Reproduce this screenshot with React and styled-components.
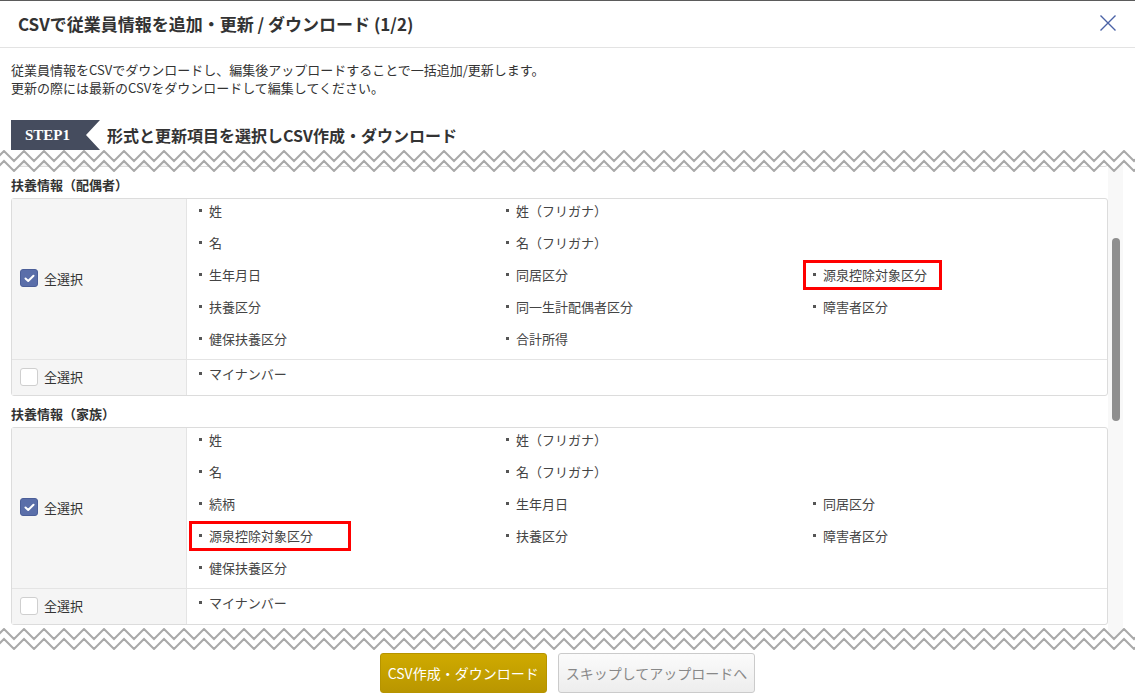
import React, { useLayoutEffect, useRef, useState } from "react";
import styled, { createGlobalStyle } from "styled-components";

const GlobalStyle = createGlobalStyle`
  html, body {
    margin: 0;
    padding: 0;
    background: #fff;
  }
  body {
    font-family: "Noto Sans CJK JP", "Noto Sans", sans-serif;
    color: #333;
  }
  *, *::before, *::after {
    box-sizing: border-box;
  }
`;

const Modal = styled.div`
  width: 1135px;
  height: 697px;
  border-top: 1px solid #5b5b5b;
  background: #fff;
  display: flex;
  flex-direction: column;
  overflow: hidden;
`;

const Header = styled.header`
  height: 47px;
  flex-shrink: 0;
  display: flex;
  align-items: center;
  justify-content: space-between;
  padding: 0 19px 2px 18px;
  border-bottom: 1px solid #e3e3e3;

  h1 {
    margin: 0;
    font-size: 17px;
    font-weight: bold;
    color: #333;
  }
`;

const CloseButton = styled.button`
  border: 0;
  background: none;
  padding: 0;
  width: 16px;
  height: 16px;
  display: flex;
  cursor: pointer;
`;

const Intro = styled.div`
  padding: 13px 11px 0;
  font-size: 13px;
  line-height: 18px;
  color: #333;
  flex-shrink: 0;

  p {
    margin: 0;
  }
`;

const StepRow = styled.div`
  margin-top: 23px;
  height: 30px;
  flex-shrink: 0;
  display: flex;
  align-items: center;
  gap: 7px;
  padding-left: 11px;

  h2 {
    margin: 0;
    font-size: 16px;
    font-weight: bold;
    color: #333;
  }
`;

const StepBadge = styled.span`
  width: 89px;
  height: 30px;
  display: flex;
  align-items: center;
  padding-left: 14px;
  background: #454c5e;
  clip-path: polygon(0 0, 100% 0, calc(100% - 14px) 50%, 100% 100%, 0 100%);
  color: #fff;
  font-family: "Liberation Serif", serif;
  font-weight: bold;
  font-size: 15px;
`;

const ScrollWrap = styled.div`
  position: relative;
  height: 500px;
  flex-shrink: 0;
  display: flex;
  padding-right: 12px;
`;

const Scroller = styled.div`
  flex: 1;
  position: relative;
  height: 100%;
  overflow: hidden;
`;

const Track = styled.div`
  width: 15px;
  height: 100%;
  background: #f8f8f8;
  display: flex;
  justify-content: center;
`;

const Thumb = styled.div`
  width: 8px;
  border-radius: 4px;
  background: #8f8f8f;
`;

const Content = styled.div`
  min-height: 1366px;
  padding: 37px 0 20px 11px;
`;

const Zig = styled.svg`
  position: absolute;
  left: 0;
  ${(p) => (p.$edge === "top" ? "top: 0;" : "bottom: 0;")}
  pointer-events: none;
`;

const Section = styled.section`
  margin-bottom: 8px;
`;

const SectionTitle = styled.h3`
  margin: 0 0 3px;
  font-size: 13px;
  line-height: 20px;
  font-weight: bold;
  color: #333;
`;

const Box = styled.div`
  border: 1px solid #dcdcdc;
  border-radius: 3px;
  display: flex;
  flex-direction: column;
`;

const Row = styled.div`
  display: grid;
  grid-template-columns: 175px 1fr;

  & + & {
    border-top: 1px solid #e4e4e4;
  }
`;

const SelectCell = styled.label`
  display: flex;
  align-items: center;
  gap: 6px;
  padding: 7px 0 9px 8px;
  background: #f5f5f5;
  border-right: 1px solid #e4e4e4;
  font-size: 13px;
  color: #333;
`;

const Check = styled.span`
  width: 18px;
  height: 18px;
  border-radius: 3px;
  display: flex;
  align-items: center;
  justify-content: center;
  background: ${(p) => (p.$on ? "#5a6ea9" : "#fff")};
  border: 1px solid ${(p) => (p.$on ? "#4b5e98" : "#cfcfcf")};
`;

const Items = styled.ul`
  margin: 0;
  padding: 0 0 0 12px;
  list-style: none;
  display: grid;
  grid-template-columns: repeat(3, 307px);
  grid-auto-rows: 32px;
  align-content: center;
`;

const Item = styled.li`
  position: relative;
  display: flex;
  align-items: center;
  width: fit-content;
  padding-bottom: 9px;
  font-size: 13px;
  color: #444;

  &::before {
    content: "";
    width: 3px;
    height: 3px;
    background: #555;
    margin-right: 7px;
  }

  ${(p) =>
    p.$mark &&
    `
    &::after {
      content: "";
      position: absolute;
      left: -10px;
      top: -3px;
      height: 30px;
      width: ${p.$mark}px;
      border: 3px solid #f00;
    }
  `}
`;

const Footer = styled.footer`
  display: flex;
  justify-content: center;
  gap: 11px;
  padding-top: 3px;
`;

const Button = styled.button`
  height: 40px;
  padding: 0 7px;
  border-radius: 3px;
  font-family: "Noto Sans CJK JP", sans-serif;
  font-size: 14px;
  cursor: pointer;
  ${(p) =>
    p.$primary
      ? `
    color: #fff;
    background: linear-gradient(#cfaa00, #b99600);
    border: 1px solid #b69400;
  `
      : `
    color: #888;
    background: linear-gradient(#fbfbfb, #ededed);
    border: 1px solid #cbcbcb;
  `}
`;

const sections = [
  {
    title: "基本情報",
    rows: [
      {
        checked: true,
        items: ["社員番号", "姓", "名", "姓（フリガナ）", "名（フリガナ）", "生年月日", "性別", "入社日", "雇用形態", "部署", "役職", "メールアドレス", "電話番号", null, null],
      },
      { checked: false, items: ["マイナンバー"] },
    ],
  },
  {
    title: "扶養情報（配偶者）",
    anchor: true,
    rows: [
      {
        checked: true,
        items: ["姓", "姓（フリガナ）", null, "名", "名（フリガナ）", null, "生年月日", "同居区分", { label: "源泉控除対象区分", mark: 139 }, "扶養区分", "同一生計配偶者区分", "障害者区分", "健保扶養区分", "合計所得", null],
      },
      { checked: false, items: ["マイナンバー"] },
    ],
  },
  {
    title: "扶養情報（家族）",
    rows: [
      {
        checked: true,
        items: ["姓", "姓（フリガナ）", null, "名", "名（フリガナ）", null, "続柄", "生年月日", "同居区分", { label: "源泉控除対象区分", mark: 162 }, "扶養区分", "障害者区分", "健保扶養区分", null, null],
      },
      { checked: false, items: ["マイナンバー"] },
    ],
  },
  {
    title: "口座情報",
    rows: [
      { checked: true, items: ["銀行名", "支店名", "口座種別", "口座番号", "口座名義", null] },
    ],
  },
  {
    title: "緊急連絡先",
    rows: [
      { checked: true, items: ["氏名", "続柄", "電話番号", "住所", null, null] },
    ],
  },
];

function zig(top, bottom, width, offset) {
  const pts = [];
  let i = 0;
  for (let x = offset - 20; x <= width + 20; x += 10, i++) {
    pts.push(`${x},${i % 2 === 0 ? top : bottom}`);
  }
  return pts;
}

function Zigzag({ edge }) {
  const w = 1135;
  const upper = zig(1, 11, w, 4);
  const lower = zig(11, 21, w, 4);
  const fill =
    edge === "top"
      ? ["-20,0", ...lower, `${w + 20},0`].join(" ")
      : [...upper, `${w + 20},22`, "-20,22"].join(" ");
  return (
    <Zig $edge={edge} width={w} height="22" viewBox={`0 0 ${w} 22`}>
      <polygon points={fill} fill="#fff" />
      <polyline points={upper.join(" ")} fill="none" stroke="#a9a9a9" strokeWidth="2" />
      <polyline points={lower.join(" ")} fill="none" stroke="#a9a9a9" strokeWidth="2" />
    </Zig>
  );
}

function CheckBox({ on }) {
  return (
    <Check $on={on}>
      {on && (
        <svg width="11" height="9" viewBox="0 0 11 9">
          <path d="M1.5 4.5 L4.2 7 L9.5 1.8" fill="none" stroke="#fff" strokeWidth="2" strokeLinecap="round" strokeLinejoin="round" />
        </svg>
      )}
    </Check>
  );
}

function FieldSection({ section, anchorRef }) {
  return (
    <Section ref={section.anchor ? anchorRef : null}>
      <SectionTitle>{section.title}</SectionTitle>
      <Box>
        {section.rows.map((row, r) => (
          <Row key={r}>
            <SelectCell>
              <CheckBox on={row.checked} />
              全選択
            </SelectCell>
            <Items>
              {row.items.map((it, i) => {
                if (!it) return <span key={i} />;
                if (typeof it === "string") return <Item key={i}>{it}</Item>;
                return (
                  <Item key={i} $mark={it.mark}>
                    {it.label}
                  </Item>
                );
              })}
            </Items>
          </Row>
        ))}
      </Box>
    </Section>
  );
}

export default function App() {
  const scrollRef = useRef(null);
  const anchorRef = useRef(null);
  const [thumb, setThumb] = useState({ top: 0, height: 0 });

  useLayoutEffect(() => {
    const el = scrollRef.current;
    if (!el || !anchorRef.current) return;
    el.scrollTop = anchorRef.current.offsetTop - 25;
    const h = el.clientHeight;
    const total = el.scrollHeight;
    setThumb({ top: (h * el.scrollTop) / total, height: (h * h) / total });
  }, []);

  return (
    <>
      <GlobalStyle />
      <Modal>
        <Header>
          <h1>CSVで従業員情報を追加・更新 / ダウンロード (1/2)</h1>
          <CloseButton aria-label="閉じる">
            <svg width="16" height="16" viewBox="0 0 16 16">
              <path d="M0.5 0.5 L15.5 15.5 M15.5 0.5 L0.5 15.5" stroke="#4a62a6" strokeWidth="1.4" />
            </svg>
          </CloseButton>
        </Header>
        <Intro>
          <p>従業員情報をCSVでダウンロードし、編集後アップロードすることで一括追加/更新します。</p>
          <p>更新の際には最新のCSVをダウンロードして編集してください。</p>
        </Intro>
        <StepRow>
          <StepBadge>STEP1</StepBadge>
          <h2>形式と更新項目を選択しCSV作成・ダウンロード</h2>
        </StepRow>
        <ScrollWrap>
          <Scroller ref={scrollRef}>
            <Content>
              {sections.map((s) => (
                <FieldSection key={s.title} section={s} anchorRef={anchorRef} />
              ))}
            </Content>
          </Scroller>
          <Track>
            <Thumb style={{ marginTop: thumb.top, height: thumb.height }} />
          </Track>
          <Zigzag edge="top" />
          <Zigzag edge="bottom" />
        </ScrollWrap>
        <Footer>
          <Button $primary>CSV作成・ダウンロード</Button>
          <Button>スキップしてアップロードへ</Button>
        </Footer>
      </Modal>
    </>
  );
}
